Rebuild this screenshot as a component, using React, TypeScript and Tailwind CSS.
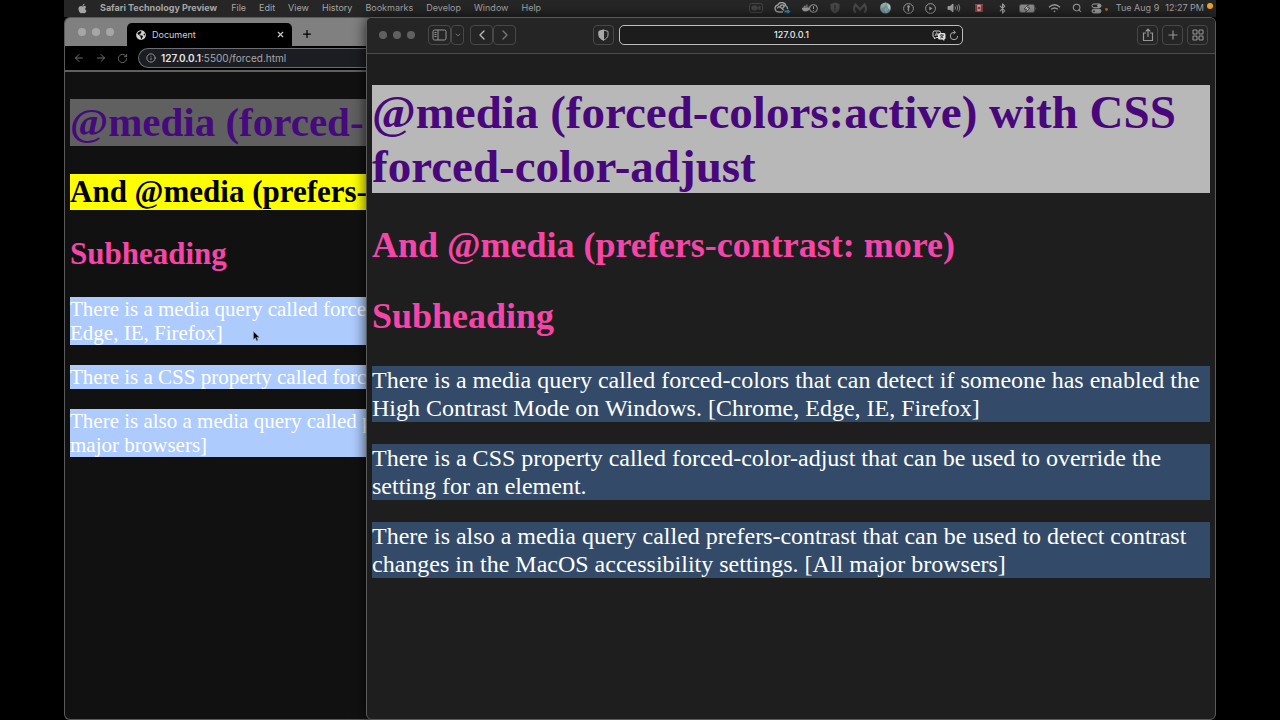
import type { ReactNode } from "react";
import { FaApple, FaDocker, FaGlobeAmericas } from "react-icons/fa";
import { ArrowLeft, ArrowRight, Bluetooth, ChevronDown, ChevronLeft, ChevronRight, Info, Plus, RotateCw, Search, X } from "lucide-react";

const menus = ["File", "Edit", "View", "History", "Bookmarks", "Develop", "Window", "Help"];

const paragraphs = [
  "There is a media query called forced-colors that can detect if someone has enabled the High Contrast Mode on Windows. [Chrome, Edge, IE, Firefox]",
  "There is a CSS property called forced-color-adjust that can be used to override the setting for an element.",
  "There is also a media query called prefers-contrast that can be used to detect contrast changes in the MacOS accessibility settings. [All major browsers]",
];

// The part of each line that shows beside the front window.
const backLines = [
  ["There is a media query called forced", "Edge, IE, Firefox]"],
  ["There is a CSS property called force"],
  ["There is also a media query called p", "major browsers]"],
];

function StatusIcons() {
  return (
    <div className="flex items-center gap-[11px] text-[#a0a0a0]">
      <svg width="14" height="10" viewBox="0 0 14 10" fill="none" stroke="#454545">
        <rect x="0.5" y="0.5" width="13" height="9" rx="2" />
        <rect x="3" y="3" width="5" height="4" rx="1" fill="#454545" />
        <path d="M8.5 5l2.5-2v4z" fill="#454545" />
      </svg>
      <svg width="17" height="12" viewBox="0 0 17 12" fill="none" stroke="#a0a0a0" strokeWidth="1.4">
        <path d="M9 10H4.5a3.6 3.6 0 01-.6-7.100A4.300 4.300 0 0112 4a3 3 0 011.500 3" />
        <path d="M3.500 6.500a1.800 1.800 0 013-1.300L10 8.500M6 4.500a2.700 2.700 0 014.500-.5L8.500 6.500" />
        <path d="M10.500 8.500h3V7l3 2.500-3 2.500v-1.500h-3z" fill="#2c8fc0" stroke="none" />
      </svg>
      <span className="flex w-[16px] items-end">
        <FaDocker size={10} className="shrink-0" />
        <svg className="-ml-[3px] shrink-0" width="9" height="9" viewBox="0 0 9 9" fill="#262626" stroke="#a0a0a0">
          <circle cx="4.500" cy="4.500" r="3.900" />
          <path d="M4.500 2.200v2.800M4.500 6v1" />
        </svg>
      </span>
      <svg width="12" height="12" viewBox="0 0 10 12">
        <path d="M5 0.500l4.500 1.500v4c0 2.500-2 4.500-4.500 5.500C2.500 10.500.5 8.500.5 6V2z" fill="#484848" />
        <path d="M5 3v3.500M5 7.500v1.200" stroke="#262626" strokeWidth="1.200" />
      </svg>
      <svg width="16" height="11" viewBox="0 0 16 11" fill="none" stroke="#484848" strokeWidth="2.200">
        <path d="M3.500 10C1.500 7 1.500 4 3.500 1.500L8 6.500l4.500-5c2 2.500 2 5.500 0 8.500" />
      </svg>
      <svg width="13" height="12" viewBox="0 0 13 12">
        <circle cx="6.500" cy="6" r="5.500" fill="#7798a8" />
        <path d="M1.500 4C3 1 6 .5 7.500 1c0 2-2 2-2 3.500L3 6zM6 6l3 1-1 4-2-1z" fill="#8eb39a" />
        <path d="M8 1.500l3 2v4l-2-1z" fill="#c3c9cc" />
      </svg>
      <svg width="11" height="11" viewBox="0 0 11 11" fill="none" stroke="#999999">
        <circle cx="5.500" cy="5.500" r="4.900" />
        <circle cx="5.500" cy="3.600" r="1.300" fill="#999999" stroke="none" />
        <path d="M5.500 4v4.500M4.500 6.500h1" strokeWidth="1.300" />
      </svg>
      <svg width="11" height="11" viewBox="0 0 11 11" fill="none" stroke="#a0a0a0">
        <circle cx="5.500" cy="5.500" r="4.900" />
        <path d="M4.300 3.400l3.200 2.100-3.200 2.100z" fill="#a0a0a0" stroke="none" />
      </svg>
      <svg width="14" height="10" viewBox="0 0 14 10" fill="none" stroke="#8c8c8c">
        <path d="M1 3.500h2l3-2.500v8L3 6.500H1z" fill="#a0a0a0" stroke="#a0a0a0" />
        <path d="M8 3.500q1 1.500 0 3M9.800 2.300q1.800 2.700 0 5.400M11.600 1.200q2.400 3.800 0 7.600" />
      </svg>
      <svg width="14" height="10" viewBox="0 0 14 10">
        <rect x="3" y="1.500" width="8" height="7" fill="#b8aaaa" />
        <path d="M3 1.500h2.200v7H3zM8.800 1.500H11v7H8.800z" fill="#a03030" />
        <circle cx="7" cy="5" r="1.300" fill="#a83232" />
      </svg>
      <Bluetooth size={11} strokeWidth={2.500} />
      <svg width="18" height="9" viewBox="0 0 18 9">
        <rect x="0.500" y="0.500" width="15" height="8" rx="2" fill="#8d8d8d" stroke="#555555" />
        <path d="M16.500 3q1.500 1.500 0 3" fill="#777777" />
        <path d="M9.500 0.500L5 5h2.500L6.500 8.500 11 4H8.500z" fill="#d0d0d0" stroke="#262626" strokeWidth="0.700" />
      </svg>
      <svg width="13" height="10" viewBox="0 0 13 10" fill="none" stroke="#a0a0a0" strokeWidth="1.400">
        <path d="M1 4.200q5.500-5 11 0M3.200 6.300q3.300-2.800 6.600 0" />
        <circle cx="6.500" cy="8.300" r="0.900" fill="#a0a0a0" stroke="none" />
      </svg>
      <Search size={10} strokeWidth={2.500} />
      <svg className="-ml-[2px]" width="18" height="11" viewBox="0 0 18 11" fill="none" stroke="#a0a0a0">
        <rect x="1" y="1" width="9" height="3.600" rx="1.800" />
        <circle cx="8" cy="2.800" r="1.300" fill="#a0a0a0" />
        <rect x="1" y="6.200" width="9" height="3.800" rx="1.900" fill="#a0a0a0" />
        <circle cx="3" cy="8.100" r="0.900" fill="#262626" stroke="none" />
        <circle cx="15.500" cy="6.500" r="1.400" fill="#b06f1c" stroke="none" />
      </svg>
    </div>
  );
}

function MenuBar() {
  return (
    <header className="flex h-[17px] items-center justify-between bg-[#262626] pb-[1px] pl-[13px] text-[9px] text-[#a5a5a5]">
      <nav aria-label="Menu bar" className="flex items-center gap-[13px]">
        <button aria-label="Apple menu" className="w-[10px]"><FaApple size={11} /></button>
        <button className="mr-[1px] font-bold">Safari Technology Preview</button>
        {menus.map((m) => <button key={m}>{m}</button>)}
      </nav>
      <div className="flex items-center gap-[7px]">
        <StatusIcons />
        <time className="flex gap-[6px] whitespace-nowrap"><span>Tue Aug 9</span><span>12:27 PM</span></time>
        <span className="mr-[3px] mb-[4px] -ml-[4px] size-[6px] rounded-full bg-[#f5a623]" />
      </div>
    </header>
  );
}

function TrafficLights({ tone }: { tone: string }) {
  return (
    <div className="flex gap-[6px]">
      {["Close", "Minimize", "Zoom"].map((n) => (
        <button key={n} aria-label={n} className={`size-[8px] rounded-full ${tone}`} />
      ))}
    </div>
  );
}

function ChromeWindow() {
  return (
    <section aria-label="Document" className="flex flex-col overflow-hidden rounded-l-[6px] border border-r-0 border-[#5a5a5a] bg-[#111111]">
      <div className="flex h-[28px] items-end bg-[#808080]">
        <div className="flex h-full items-center pb-[1px] pl-[13px]"><TrafficLights tone="bg-[#a6a6a6]" /></div>
        <div className="ml-[13px] flex h-[23px] w-[165px] items-center rounded-t-[5px] bg-black pr-[7px] pl-[9px] text-[9px] text-[#cfcfcf]">
          <FaGlobeAmericas size={10} />
          <span className="ml-[6px] grow">Document</span>
          <button aria-label="Close tab"><X size={9} strokeWidth={3} /></button>
        </div>
        <button aria-label="New tab" className="mb-[6px] ml-[9px] text-black"><Plus size={12} strokeWidth={2.500} /></button>
      </div>
      <div className="flex h-[24px] items-center bg-black pl-[8px] text-[#6e6e6e]">
        <button aria-label="Back"><ArrowLeft size={12} /></button>
        <button aria-label="Forward" className="ml-[10px]"><ArrowRight size={12} /></button>
        <button aria-label="Reload" className="ml-[10px]"><RotateCw size={11} /></button>
        <div className="ml-[10px] flex h-[20px] grow items-center gap-[5px] rounded-l-full border border-r-0 border-[#6c6e74] bg-[#1c1d22] pl-[7px] text-[10px] text-[#a8a8a8]">
          <Info size={10} />
          <span><b className="font-semibold text-[#e2e2e2]">127.0.0.1</b>:5500/forced.html</span>
        </div>
      </div>
      <div className="grow border-t-2 border-[#606060] pt-[27px] pl-[5px] font-['Liberation_Serif',serif] whitespace-nowrap">
        <h1 className="mb-[28px] bg-[#606060] text-[41px] leading-[47px] font-bold text-[#450a7c]">@media (forced-</h1>
        <h2 className="mb-[26px] bg-[#ffff00] text-[31px] leading-[36px] font-bold text-black">And @media (prefers-</h2>
        <h2 className="mb-[25px] text-[31px] leading-[36px] font-bold text-[#f645a8]">Subheading</h2>
        <div className="flex flex-col gap-[20px]">
          {backLines.map((lines) => (
            <p key={lines[0]} className="bg-[#adcbfd] text-[21px] leading-[24px] text-white">
              {lines.map((line) => <span key={line} className="block">{line}</span>)}
            </p>
          ))}
        </div>
      </div>
    </section>
  );
}

function ToolButton({ label, width, className = "", children }: { label: string; width: string; className?: string; children: ReactNode }) {
  return (
    <button aria-label={label} className={`flex h-[20px] items-center justify-center rounded-[4px] border border-[#484848] text-[#969696] ${width} ${className}`}>
      {children}
    </button>
  );
}

function SafariWindow() {
  return (
    <section aria-label="127.0.0.1" className="z-10 -ml-[6px] flex flex-col overflow-hidden rounded-[6px] border border-[#5a5a5a] bg-[#1e1e1e] shadow-[0_0_14px_rgba(0,0,0,0.75)]">
      <div className="grid h-[36px] grid-cols-[1fr_344px_1fr] items-center gap-[5px] border-b border-[#4c4c4c] bg-[#252525] pb-[1px]">
        <div className="flex items-center pl-[12px]">
          <TrafficLights tone="bg-[#606060]" />
          <ToolButton label="Sidebar" width="w-[23px]" className="ml-[13px]">
            <svg width="15" height="12" viewBox="0 0 15 12" fill="none" stroke="currentColor">
              <rect x="1" y="1" width="13" height="10" rx="1.500" />
              <path d="M6 1v10M2.500 3.500h2M2.500 5.500h2M2.500 7.500h2" />
            </svg>
          </ToolButton>
          <ToolButton label="Tab groups" width="w-[13px]"><ChevronDown size={8} /></ToolButton>
          <ToolButton label="Back" width="w-[23px]" className="ml-[6px]"><ChevronLeft size={16} className="shrink-0 text-[#b8b8b8]" /></ToolButton>
          <ToolButton label="Forward" width="w-[23px]"><ChevronRight size={16} className="shrink-0 text-[#777777]" /></ToolButton>
          <ToolButton label="Privacy report" width="w-[21px]" className="ml-auto">
            <svg width="11" height="12" viewBox="0 0 11 12" fill="none" stroke="#a8a8a8">
              <path d="M5.500 1L10 2.400V6c0 2.300-2 4-4.500 5.200C3 10 1 8.300 1 6V2.400z" />
              <path d="M5.500 1L1 2.400V6c0 2.300 2 4 4.500 5.200z" fill="#a8a8a8" />
            </svg>
          </ToolButton>
        </div>
        <div className="flex h-[20px] items-center rounded-[5px] border border-[#bdbdbd] bg-[#1c1c1c] pr-[3px] pl-[31px]">
          <input aria-label="Address" defaultValue="127.0.0.1" className="w-0 min-w-0 grow bg-transparent text-center text-[9px] font-medium text-[#e8e8e8] outline-none" />
          <button aria-label="Translate">
            <svg width="14" height="11" viewBox="0 0 14 11" fill="none">
              <path d="M2.500 1H7a1.500 1.500 0 011.500 1.500V6A1.500 1.500 0 017 7.500H4L2.500 9V7.500A1.500 1.500 0 011 6V2.500A1.500 1.500 0 012.500 1z" stroke="#d0d0d0" />
              <path d="M3 6l1.700-3.500L6.400 6M3.600 5h2.200" stroke="#d0d0d0" strokeWidth="0.800" />
              <path d="M7.500 3H12a1.500 1.500 0 011.500 1.500V8a1.500 1.500 0 01-1.300 1.500V11L10.500 9.500h-3A1.500 1.500 0 016 8V4.500A1.500 1.500 0 017.500 3z" fill="#e0e0e0" />
              <path d="M7.800 5h4M9.800 4.200V5M8.200 8q2.500-1 3-3M8.500 5.500q.7 1.800 2.800 2.500" stroke="#222222" strokeWidth="0.800" />
            </svg>
          </button>
          <button aria-label="Reload" className="ml-[3px] text-[#a8a8a8]">
            <svg width="10" height="11" viewBox="0 0 10 11" fill="none" stroke="currentColor">
              <path d="M8.700 6a3.700 3.700 0 11-3.700-3.700h1M4.500.4l2 1.900-2 2" />
            </svg>
          </button>
        </div>
        <div className="flex items-center justify-end gap-[4px] pr-[7px]">
          <ToolButton label="Share" width="w-[21px]">
            <svg width="12" height="14" viewBox="0 0 12 14" fill="none" stroke="currentColor" strokeWidth="1.200">
              <path d="M4 5H1.500v7.500h9V5H8M6 9V1.200M3.700 3.300L6 1l2.300 2.300" />
            </svg>
          </ToolButton>
          <ToolButton label="New tab" width="w-[21px]"><Plus size={14} strokeWidth={2} /></ToolButton>
          <ToolButton label="Tab overview" width="w-[21px]">
            <svg width="12" height="12" viewBox="0 0 12 12" fill="none" stroke="currentColor" strokeWidth="1.100">
              <rect x="1" y="1" width="4" height="4" rx="0.800" /><rect x="7" y="1" width="4" height="4" rx="0.800" />
              <rect x="1" y="7" width="4" height="4" rx="0.800" /><rect x="7" y="7" width="4" height="4" rx="0.800" />
            </svg>
          </ToolButton>
        </div>
      </div>
      <div className="px-[5px] pt-[31px] font-['Liberation_Serif',serif]">
        <h1 className="mb-[32px] bg-[#b8b8b8] text-[47px] leading-[54px] font-bold text-[#48087c]">@media (forced-colors:active) with CSS forced-color-adjust</h1>
        <h2 className="mb-[30px] text-[36px] leading-[41px] font-bold text-[#f645a8]">And @media (prefers-contrast: more)</h2>
        <h2 className="mb-[29px] text-[36px] leading-[41px] font-bold text-[#f645a8]">Subheading</h2>
        <div className="flex flex-col gap-[22px]">
          {paragraphs.map((p) => <p key={p} className="bg-[#334b68] text-[24px] leading-[28px] text-white">{p}</p>)}
        </div>
      </div>
    </section>
  );
}

export default function App() {
  return (
    <div className="min-h-screen bg-black px-[64px] font-['Inter','Liberation_Sans',sans-serif]">
      <div className="flex min-h-screen flex-col">
        <MenuBar />
        <main className="relative grid grow grid-cols-[308px_minmax(0,1fr)]">
          <ChromeWindow />
          <SafariWindow />
          <svg aria-hidden="true" className="absolute top-[314px] left-[189px]" width="7" height="11" viewBox="0 0 7 11">
            <path d="M0.500 0.500v8l1.900-1.700 1.300 3 1.300-.6-1.300-2.900h2.600z" fill="#000000" stroke="#8f9db5" strokeWidth="0.500" />
          </svg>
        </main>
      </div>
    </div>
  );
}
